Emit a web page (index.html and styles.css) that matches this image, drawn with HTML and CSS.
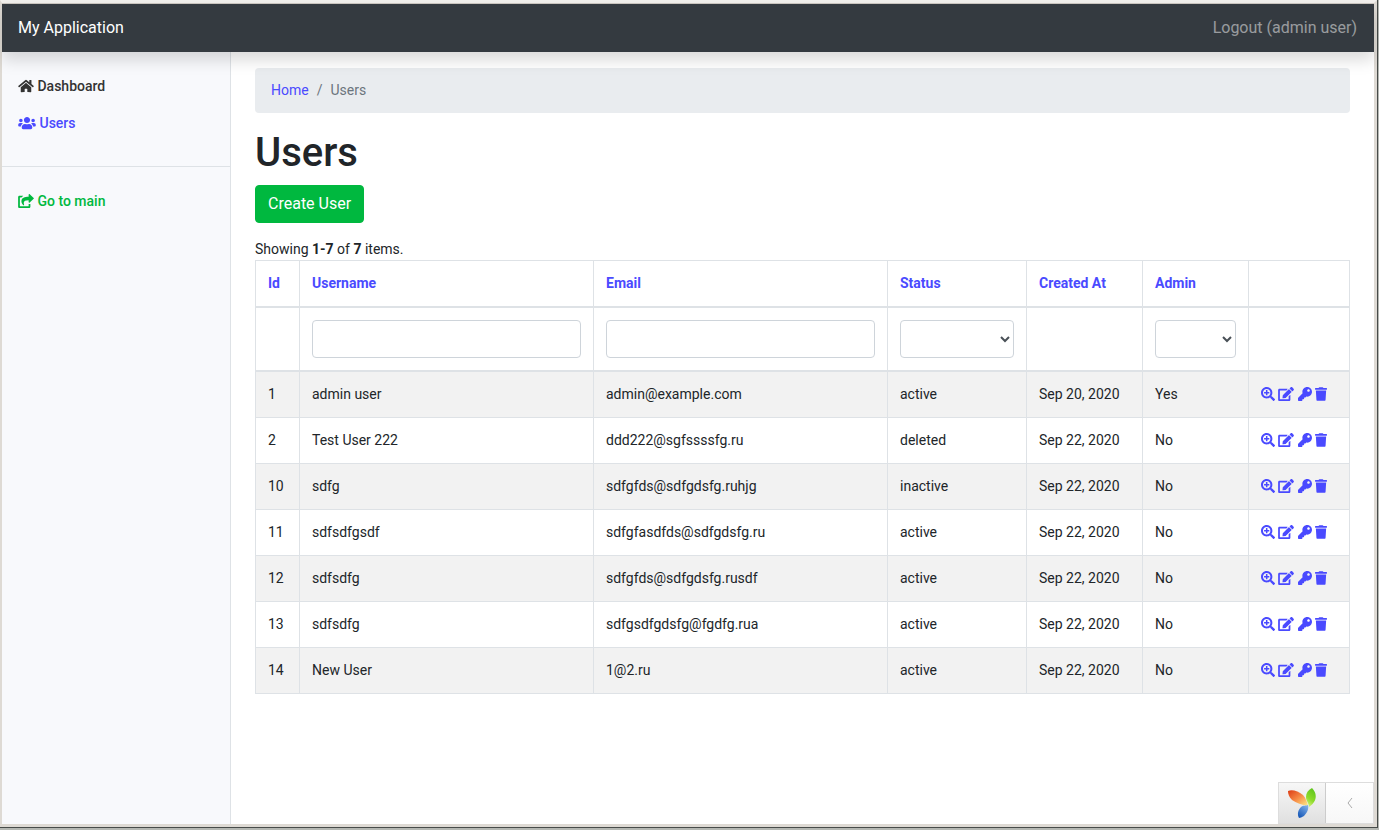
FILE: index.html
```html
<!DOCTYPE html>
<html lang="en">
<head>
  <meta charset="UTF-8" />
  <meta name="viewport" content="width=device-width, initial-scale=1.0" />
  <title>Users</title>
  <link rel="stylesheet" href="styles.css">
</head>
<body>
<!-- Icon sprite -->
<svg class="sprite" aria-hidden="true">
  <symbol id="home" viewBox="0 0 576 512"><path d="M280.37 148.26L96 300.11V464a16 16 0 0 0 16 16l112.06-.29a16 16 0 0 0 15.92-16V368a16 16 0 0 1 16-16h64a16 16 0 0 1 16 16v95.64a16 16 0 0 0 16 16.05L464 480a16 16 0 0 0 16-16V300L295.67 148.26a12.19 12.19 0 0 0-15.3 0zM571.6 251.47L488 182.56V44.05a12 12 0 0 0-12-12h-56a12 12 0 0 0-12 12v72.61L318.47 43a48 48 0 0 0-61 0L4.34 251.47a12 12 0 0 0-1.6 16.9l25.5 31A12 12 0 0 0 45.15 301l235.22-193.74a12.19 12.19 0 0 1 15.3 0L530.9 301a12 12 0 0 0 16.9-1.6l25.5-31a12 12 0 0 0-1.7-16.93z"/></symbol>
  <symbol id="users" viewBox="0 0 640 512"><path d="M96 224c35.3 0 64-28.7 64-64s-28.7-64-64-64-64 28.7-64 64 28.7 64 64 64zm448 0c35.3 0 64-28.7 64-64s-28.7-64-64-64-64 28.7-64 64 28.7 64 64 64zm32 32h-64c-17.6 0-33.5 7.1-45.1 18.6 40.3 22.1 68.9 62 75.1 109.4h66c17.7 0 32-14.3 32-32v-32c0-35.3-28.7-64-64-64zm-256 0c61.9 0 112-50.1 112-112S381.9 32 320 32 208 82.1 208 144s50.1 112 112 112zm76.8 32h-8.3c-20.8 10-43.9 16-68.5 16s-47.6-6-68.5-16h-8.3C179.6 288 128 339.6 128 403.2V432c0 26.5 21.5 48 48 48h288c26.5 0 48-21.5 48-48v-28.8c0-63.6-51.6-115.2-115.2-115.2zm-223.7-13.4C161.5 263.1 145.6 256 128 256H64c-35.3 0-64 28.7-64 64v32c0 17.7 14.3 32 32 32h65.9c6.3-47.4 34.9-87.3 75.2-109.4z"/></symbol>
  <symbol id="share" viewBox="0 0 576 512"><path d="M568.482 177.448L424.479 313.433C409.3 327.768 384 317.14 384 295.985v-71.963c-144.575.97-205.566 35.113-164.775 171.353 4.483 14.973-12.846 26.567-25.006 17.33C155.252 383.105 120 326.488 120 269.339c0-143.937 117.599-172.5 264-173.312V24.012c0-21.174 25.317-31.768 40.479-17.448l144.003 135.988c10.02 9.463 10.028 25.425 0 34.896zM384 379.128V448H64V128h50.916a11.99 11.99 0 0 0 8.648-3.693c14.953-15.568 32.237-27.89 51.014-37.676C185.708 80.83 181.584 64 169.033 64H48C21.49 64 0 85.49 0 112v352c0 26.51 21.49 48 48 48h352c26.51 0 48-21.49 48-48v-88.806c0-8.288-8.197-14.066-16.011-11.302a71.83 71.83 0 0 1-34.189 3.377c-7.27-1.046-13.8 4.514-13.8 11.859z"/></symbol>
  <symbol id="view" viewBox="0 0 512 512"><path d="M304 192v32c0 6.6-5.4 12-12 12h-56v56c0 6.6-5.4 12-12 12h-32c-6.6 0-12-5.4-12-12v-56h-56c-6.6 0-12-5.4-12-12v-32c0-6.6 5.4-12 12-12h56v-56c0-6.6 5.4-12 12-12h32c6.6 0 12 5.4 12 12v56h56c6.6 0 12 5.4 12 12zm201 284.7L476.7 505c-9.4 9.4-24.6 9.4-33.9 0L343 405.3c-4.5-4.5-7-10.6-7-17V372c-35.3 27.6-79.7 44-128 44C93.1 416 0 322.9 0 208S93.1 0 208 0s208 93.1 208 208c0 48.3-16.4 92.7-44 128h16.3c6.4 0 12.5 2.5 17 7l99.7 99.7c9.3 9.4 9.3 24.6 0 34zM344 208c0-75.2-60.8-136-136-136S72 132.8 72 208s60.8 136 136 136 136-60.8 136-136z"/></symbol>
  <symbol id="edit" viewBox="0 0 576 512"><path d="M402.6 83.2l90.2 90.2c3.8 3.8 3.8 10 0 13.8L274.4 405.6l-92.8 10.3c-12.4 1.4-22.9-9.1-21.5-21.5l10.3-92.8L388.8 83.2c3.8-3.8 10-3.8 13.8 0zm162-22.9l-48.8-48.8c-15.2-15.2-39.9-15.2-55.2 0l-35.4 35.4c-3.8 3.8-3.8 10 0 13.8l90.2 90.2c3.8 3.8 10 3.8 13.8 0l35.4-35.4c15.2-15.3 15.2-40 0-55.2zM384 346.2V448H64V128h229.8c3.2 0 6.2-1.3 8.5-3.5l40-40c7.6-7.6 2.2-20.5-8.5-20.5H48C21.5 64 0 85.5 0 112v352c0 26.5 21.5 48 48 48h352c26.5 0 48-21.5 48-48V306.2c0-10.7-12.9-16-20.5-8.5l-40 40c-2.2 2.3-3.5 5.3-3.5 8.5z"/></symbol>
  <symbol id="key" viewBox="0 0 512 512"><path d="M512 176.001C512 273.203 433.202 352 336 352c-11.22 0-22.19-1.062-32.827-3.069l-24.012 27.014A23.999 23.999 0 0 1 261.223 384H224v40c0 13.255-10.745 24-24 24h-40v40c0 13.255-10.745 24-24 24H24c-13.255 0-24-10.745-24-24v-78.059c0-6.365 2.529-12.47 7.029-16.971l161.802-161.802C163.108 213.814 160 195.271 160 176 160 78.798 238.797.001 335.999 0 433.488-.001 512 78.511 512 176.001zM336 128c0 26.51 21.49 48 48 48s48-21.49 48-48-21.49-48-48-48-48 21.49-48 48z"/></symbol>
  <symbol id="trash" viewBox="0 0 448 512"><path d="M432 32H312l-9.4-18.7A24 24 0 0 0 281.1 0H166.8a23.72 23.72 0 0 0-21.4 13.3L136 32H16A16 16 0 0 0 0 48v32a16 16 0 0 0 16 16h416a16 16 0 0 0 16-16V48a16 16 0 0 0-16-16zM53.2 467a48 48 0 0 0 47.9 45h245.8a48 48 0 0 0 47.9-45L416 128H32z"/></symbol>
</svg>

<div class="window">
  <header class="navbar">
    <a class="brand" href="#">My Application</a>
    <button class="logout" type="button">Logout (admin user)</button>
  </header>

  <div class="layout">
    <!-- Sidebar -->
    <nav class="sidebar">
      <a class="nav-link" href="#"><svg class="icon icon-wide"><use href="#home"/></svg> Dashboard</a>
      <a class="nav-link active" href="#"><svg class="icon icon-users"><use href="#users"/></svg> Users</a>
      <hr>
      <a class="nav-link success" href="#"><svg class="icon icon-wide"><use href="#share"/></svg> Go to main</a>
    </nav>

    <main class="content">
      <ol class="breadcrumb">
        <li><a href="#">Home</a></li>
        <li>Users</li>
      </ol>
      <h1>Users</h1>
      <p><a class="btn" href="#">Create User</a></p>

      <div class="summary">Showing <b>1-7</b> of <b>7</b> items.</div>
      <table class="table">
        <colgroup>
          <col class="col-id">
          <col>
          <col>
          <col class="col-status">
          <col class="col-created">
          <col class="col-admin">
          <col class="col-actions">
        </colgroup>
        <thead>
          <tr>
            <th><a href="#">Id</a></th>
            <th><a href="#">Username</a></th>
            <th><a href="#">Email</a></th>
            <th><a href="#">Status</a></th>
            <th><a href="#">Created At</a></th>
            <th><a href="#">Admin</a></th>
            <th></th>
          </tr>
          <tr class="filters">
            <td></td>
            <td><input type="text" class="form-control" aria-label="Username"></td>
            <td><input type="text" class="form-control" aria-label="Email"></td>
            <td><select class="form-control" aria-label="Status"><option></option><option>active</option><option>inactive</option><option>deleted</option></select></td>
            <td></td>
            <td><select class="form-control" aria-label="Admin"><option></option><option>No</option><option>Yes</option></select></td>
            <td></td>
          </tr>
        </thead>
        <tbody>
          <tr>
            <td>1</td><td>admin user</td><td>admin@example.com</td><td>active</td><td>Sep 20, 2020</td><td>Yes</td>
            <td class="actions">
              <a href="#" aria-label="View"><svg class="icon"><use href="#view"/></svg></a>
              <a href="#" aria-label="Update"><svg class="icon icon-wide"><use href="#edit"/></svg></a>
              <a href="#" aria-label="Change password"><svg class="icon"><use href="#key"/></svg></a>
              <a href="#" aria-label="Delete"><svg class="icon icon-trash"><use href="#trash"/></svg></a>
            </td>
          </tr>
          <tr>
            <td>2</td><td>Test User 222</td><td>ddd222@sgfssssfg.ru</td><td>deleted</td><td>Sep 22, 2020</td><td>No</td>
            <td class="actions">
              <a href="#" aria-label="View"><svg class="icon"><use href="#view"/></svg></a>
              <a href="#" aria-label="Update"><svg class="icon icon-wide"><use href="#edit"/></svg></a>
              <a href="#" aria-label="Change password"><svg class="icon"><use href="#key"/></svg></a>
              <a href="#" aria-label="Delete"><svg class="icon icon-trash"><use href="#trash"/></svg></a>
            </td>
          </tr>
          <tr>
            <td>10</td><td>sdfg</td><td>sdfgfds@sdfgdsfg.ruhjg</td><td>inactive</td><td>Sep 22, 2020</td><td>No</td>
            <td class="actions">
              <a href="#" aria-label="View"><svg class="icon"><use href="#view"/></svg></a>
              <a href="#" aria-label="Update"><svg class="icon icon-wide"><use href="#edit"/></svg></a>
              <a href="#" aria-label="Change password"><svg class="icon"><use href="#key"/></svg></a>
              <a href="#" aria-label="Delete"><svg class="icon icon-trash"><use href="#trash"/></svg></a>
            </td>
          </tr>
          <tr>
            <td>11</td><td>sdfsdfgsdf</td><td>sdfgfasdfds@sdfgdsfg.ru</td><td>active</td><td>Sep 22, 2020</td><td>No</td>
            <td class="actions">
              <a href="#" aria-label="View"><svg class="icon"><use href="#view"/></svg></a>
              <a href="#" aria-label="Update"><svg class="icon icon-wide"><use href="#edit"/></svg></a>
              <a href="#" aria-label="Change password"><svg class="icon"><use href="#key"/></svg></a>
              <a href="#" aria-label="Delete"><svg class="icon icon-trash"><use href="#trash"/></svg></a>
            </td>
          </tr>
          <tr>
            <td>12</td><td>sdfsdfg</td><td>sdfgfds@sdfgdsfg.rusdf</td><td>active</td><td>Sep 22, 2020</td><td>No</td>
            <td class="actions">
              <a href="#" aria-label="View"><svg class="icon"><use href="#view"/></svg></a>
              <a href="#" aria-label="Update"><svg class="icon icon-wide"><use href="#edit"/></svg></a>
              <a href="#" aria-label="Change password"><svg class="icon"><use href="#key"/></svg></a>
              <a href="#" aria-label="Delete"><svg class="icon icon-trash"><use href="#trash"/></svg></a>
            </td>
          </tr>
          <tr>
            <td>13</td><td>sdfsdfg</td><td>sdfgsdfgdsfg@fgdfg.rua</td><td>active</td><td>Sep 22, 2020</td><td>No</td>
            <td class="actions">
              <a href="#" aria-label="View"><svg class="icon"><use href="#view"/></svg></a>
              <a href="#" aria-label="Update"><svg class="icon icon-wide"><use href="#edit"/></svg></a>
              <a href="#" aria-label="Change password"><svg class="icon"><use href="#key"/></svg></a>
              <a href="#" aria-label="Delete"><svg class="icon icon-trash"><use href="#trash"/></svg></a>
            </td>
          </tr>
          <tr>
            <td>14</td><td>New User</td><td>1@2.ru</td><td>active</td><td>Sep 22, 2020</td><td>No</td>
            <td class="actions">
              <a href="#" aria-label="View"><svg class="icon"><use href="#view"/></svg></a>
              <a href="#" aria-label="Update"><svg class="icon icon-wide"><use href="#edit"/></svg></a>
              <a href="#" aria-label="Change password"><svg class="icon"><use href="#key"/></svg></a>
              <a href="#" aria-label="Delete"><svg class="icon icon-trash"><use href="#trash"/></svg></a>
            </td>
          </tr>
        </tbody>
      </table>
    </main>
  </div>

  <!-- Debug toolbar -->
  <div class="debug-toolbar">
    <a class="debug-logo" href="#" aria-label="Yii debugger">
      <svg width="28" height="30" viewBox="0 0 28 30">
        <defs>
          <linearGradient id="orange" x1="0" y1="0" x2="1" y2="1">
            <stop offset="0" stop-color="#dc3b14"/><stop offset=".5" stop-color="#f68a45"/><stop offset="1" stop-color="#fff08a"/>
          </linearGradient>
          <linearGradient id="green" x1=".7" y1="0" x2=".3" y2="1">
            <stop offset="0" stop-color="#5cc41c"/><stop offset=".6" stop-color="#8edb2b"/><stop offset="1" stop-color="#d4f27a"/>
          </linearGradient>
          <linearGradient id="blue" x1=".8" y1="0" x2=".2" y2="1">
            <stop offset="0" stop-color="#7fb0ea"/><stop offset="1" stop-color="#1455b5"/>
          </linearGradient>
        </defs>
        <path fill="url(#orange)" d="M0 3C4 1 10 3 15 7C18 10 19 14 20 18C14 17 8 15 4 12C1 9 0 6 0 3z"/>
        <path fill="url(#green)" d="M24 0C28 4 29 9 26 14C24 17 22 18 21 19C21 15 18 13 18 9C18 5 20 2 24 0z"/>
        <path fill="url(#blue)" d="M20 17C21 21 19 25 16 28C14 29 12 30 11 30C9 26 10 22 13 19C15 17 18 18 20 17z"/>
      </svg>
    </a>
    <button class="debug-toggle" type="button" aria-label="Open toolbar">
      <svg width="6" height="10" viewBox="0 0 6 10"><path d="M5 0L1 5L5 10" fill="none" stroke="#aaa"/></svg>
    </button>
  </div>
</div>
</body>
</html>
```
FILE: styles.css
```css
* {
  box-sizing: border-box;
}
body {
  margin: 0;
  min-height: 100vh;
  display: flex;
  padding: 0 2px 3px 0;
  background: #b5b8b3;
  font-family: Roboto, sans-serif;
  font-size: 14px;
  line-height: 21px;
  color: #212529;
}
a {
  color: #4a4aff;
  text-decoration: none;
}
.sprite {
  position: absolute;
  width: 0;
  height: 0;
}
.icon {
  width: 14px;
  height: 14px;
  fill: currentColor;
  vertical-align: -2px;
}
.icon-wide {
  width: 16px;
}
.icon-users {
  width: 18px;
}
.icon-trash {
  width: 12px;
}

/* Window frame */
.window {
  position: relative;
  flex: 1;
  min-width: 0;
  display: flex;
  flex-direction: column;
  border: solid #dedad4;
  border-width: 3px 3px 3px 2px;
  border-top-color: #f3f1ee;
  outline: 1px solid #474b49;
  background: #fff;
}

/* Header */
.navbar {
  position: relative;
  z-index: 1;
  display: flex;
  justify-content: space-between;
  align-items: center;
  padding: 12px 17px 12px 16px;
  border-top: 1px solid #c9c4be;
  background: #343a40;
  box-shadow: 0 8px 16px rgba(0, 0, 0, 0.15);
  font-size: 16px;
  line-height: 24px;
}
.brand {
  color: #fff;
}
.logout {
  padding: 0;
  border: none;
  background: none;
  font: inherit;
  color: rgba(255, 255, 255, 0.5);
  cursor: pointer;
}
.layout {
  flex: 1;
  display: flex;
}

/* Sidebar */
.sidebar {
  flex: 0 0 229px;
  padding-top: 16px;
  background: #f8f9fc;
  border-right: 1px solid #dee2e6;
}
.nav-link {
  display: block;
  padding: 8px 16px;
  font-weight: 500;
  color: #333;
}
.nav-link.active {
  color: #4a4aff;
}
.nav-link.success {
  color: #00b83f;
}
.sidebar hr {
  margin: 24px 0 16px;
  border: none;
  border-top: 1px solid #dee2e6;
}

/* Content */
.content {
  flex: 1;
  min-width: 0;
  padding: 16px 24px;
}
.breadcrumb {
  display: flex;
  margin: 0 0 16px;
  padding: 12px 16px;
  list-style: none;
  background: #e9ecef;
  border-radius: 4px;
  color: #6c757d;
}
.breadcrumb li + li::before {
  content: "/";
  padding: 0 8px;
}
h1 {
  margin: 0 0 8px;
  font-size: 40px;
  line-height: 48px;
  font-weight: 500;
}
p {
  margin: 0 0 16px;
}
.btn {
  display: inline-block;
  vertical-align: top;
  padding: 6px 12px;
  border: 1px solid #00b83f;
  border-radius: 4px;
  background: #00b83f;
  color: #fff;
  font-size: 16px;
  line-height: 24px;
}

/* Users grid */
.table {
  width: 100%;
  table-layout: fixed;
  border-collapse: collapse;
}
.col-id {
  width: 44px;
}
.col-status {
  width: 139px;
}
.col-created {
  width: 116px;
}
.col-admin {
  width: 106px;
}
.col-actions {
  width: 101px;
}
.table th,
.table td {
  padding: 12px;
  border: 1px solid #dee2e6;
  text-align: left;
  vertical-align: top;
}
.table thead th,
.table thead td {
  border-bottom-width: 2px;
}
.table tbody tr:nth-child(odd) {
  background: #f2f2f2;
}
.table .actions {
  white-space: nowrap;
}
.form-control {
  display: block;
  width: 100%;
  height: 38px;
  border: 1px solid #ced4da;
  border-radius: 4px;
  background: #fff;
  color: #495057;
  font: inherit;
  font-size: 16px;
}
input.form-control {
  padding: 6px 12px;
}

/* Debug toolbar */
.debug-toolbar {
  position: absolute;
  right: 0;
  bottom: 0;
  display: flex;
  height: 42px;
  border: 1px solid #ddd;
  border-width: 1px 1px 1px 1px;
}
.debug-logo,
.debug-toggle {
  display: flex;
  align-items: center;
  justify-content: center;
  width: 47px;
  padding: 0;
  border: none;
}
.debug-logo {
  border-right: 1px solid #ccc;
  background: linear-gradient(#f7f7f7, #e0e0e0);
}
.debug-toggle {
  background: linear-gradient(#fff, #f7f7f7);
  cursor: pointer;
}
```
